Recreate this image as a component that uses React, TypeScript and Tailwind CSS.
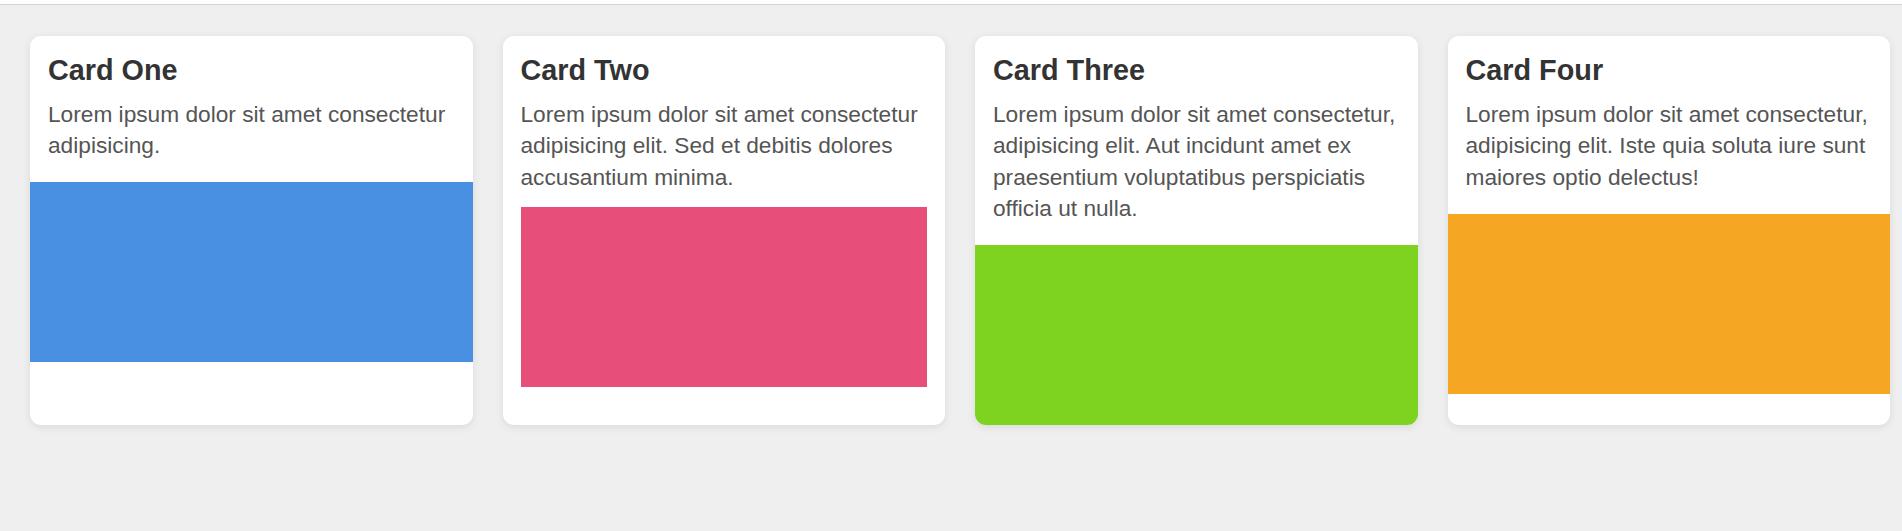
import React from "react";

// four simple cards in a row, each with a coloured block

type Card = {
  title: string;
  text: string;
  color: string;
  inset?: boolean;
};

const cards: Card[] = [
  {
    title: "Card One",
    text: "Lorem ipsum dolor sit amet consectetur adipisicing.",
    color: "bg-[#4a90e2]",
  },
  {
    title: "Card Two",
    text: "Lorem ipsum dolor sit amet consectetur adipisicing elit. Sed et debitis dolores accusantium minima.",
    color: "bg-[#e84f78]",
    inset: true,
  },
  {
    title: "Card Three",
    text: "Lorem ipsum dolor sit amet consectetur, adipisicing elit. Aut incidunt amet ex praesentium voluptatibus perspiciatis officia ut nulla.",
    color: "bg-[#7ed321]",
  },
  {
    title: "Card Four",
    text: "Lorem ipsum dolor sit amet consectetur, adipisicing elit. Iste quia soluta iure sunt maiores optio delectus!",
    color: "bg-[#f5a623]",
  },
];

function CardItem({ card }: { card: Card }) {
  return (
    <div className="overflow-hidden rounded-[11px] bg-white shadow-[0_2px_8px_rgba(0,0,0,0.09)]">
      <div className="px-[18px] pt-[18px]">
        <h2 className="mb-[12px] text-[28.8px] leading-[33px] font-bold text-[#333]">
          {card.title}
        </h2>
        <p
          className={
            card.inset
              ? "mb-[14.5px] text-[22.7px] leading-[31.33px] text-[#555]"
              : "mb-[20.7px] text-[22.7px] leading-[31.33px] text-[#555]"
          }>
          {card.text}
        </p>
      </div>
      <div
        className={
          card.inset
            ? `mx-[18px] h-[180px] ${card.color}`
            : `h-[180px] ${card.color}`
        }></div>
    </div>
  );
}

export default function App() {
  return (
    <div
      className="min-h-screen bg-[#efefef]"
      style={{ fontFamily: '"Liberation Sans", Arial, sans-serif' }}>
      <div className="h-[5px] border-b border-[#d2d2d2] bg-white"></div>
      <div className="grid grid-cols-[repeat(4,442.5px)] gap-[30px] pt-[31px] pl-[30px]">
        {cards.map((card, i) => (
          <CardItem key={i} card={card} />
        ))}
      </div>
    </div>
  );
}
